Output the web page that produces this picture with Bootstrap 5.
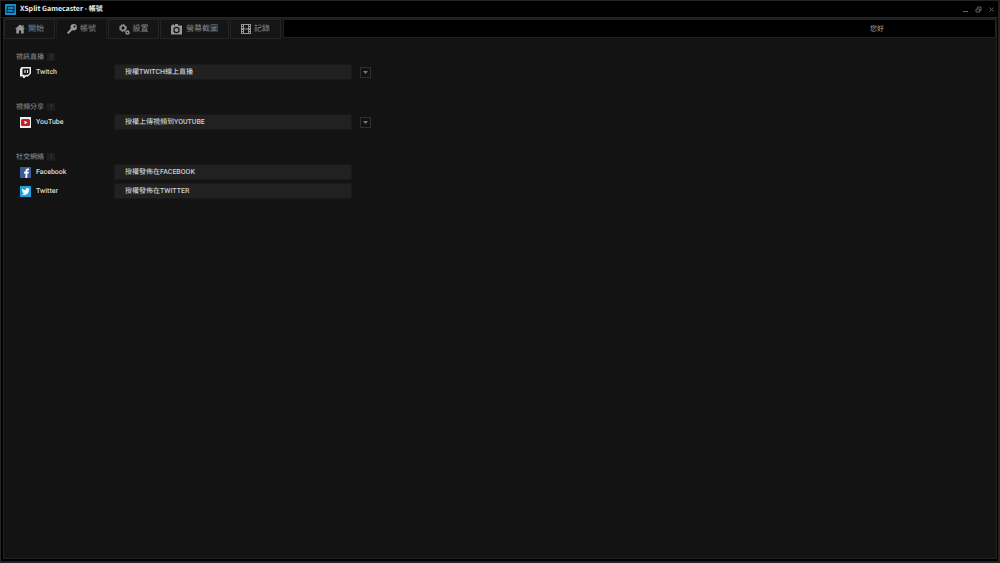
<!DOCTYPE html>
<html lang="zh-Hant">
<head>
<meta charset="utf-8">
<meta name="viewport" content="width=device-width, initial-scale=1">
<title>XSplit Gamecaster - 帳號</title>
<link href="https://cdn.jsdelivr.net/npm/bootstrap@5.3.0/dist/css/bootstrap.min.css" rel="stylesheet">
<style>
body{background:#131313;color:#b4b4b4;font-family:"Noto Sans CJK TC",sans-serif;font-size:7px;line-height:10px;text-rendering:geometricPrecision}
button{text-rendering:inherit}
.frame{border:1px solid #232323;border-width:1px 2px 2px 1px}
.titlebar{height:17px;background:#000;border-bottom:1px solid #262626;padding:0 0 0 4px}
.titlebar h1{font-size:7px;line-height:12px;color:#f0f0f0;padding-left:4px}
.winbtn{width:13px;height:14px;background:none;color:#606060}
.inner{border:1px solid #000;border-width:0 1px 2px 2px;box-shadow:inset 0 0 0 1px #202020}
.strip{padding:1px 1px 0;height:22px}
.tab{height:20px;background:#151515;border:1px solid #242424;color:#868686;font-size:8px;line-height:12px;gap:3px;margin-right:1px}
.tab.active{background:#131313;border-color:#1c1c1c #1c1c1c #131313}
.tab-s{width:51px}.tab-l{width:69px;gap:4px}
.greet{height:19px;background:#000;border:1px solid #202020;margin-left:1px;padding-right:111px;color:#aaa}
.main{padding:12px 13px}
.group{margin-bottom:22px}
.group h2{font-size:7px;line-height:10px;color:#808080;gap:3px}
.help{width:8px;height:8px;font-size:6px;line-height:8px;background:#1e1e1e;color:#484848}
.entry{height:16px;margin-bottom:3px}
.group .entry:first-of-type{margin-top:2px}
.svc,.auth{font-family:Roboto,"Noto Sans CJK TC",sans-serif;font-weight:500}
.svc{width:98px;padding-left:4px;gap:5px;color:#dadada}
.auth{width:238px;height:16px;background:#212121;border:1px solid #191919;color:#cacaca;padding:0 0 0 10px;line-height:12px}
.drop{width:11px;height:11px;margin-left:8px;background:#121212;border:1px solid #303030}
</style>
</head>
<body>
<div class="frame d-flex flex-column vh-100">
  <header class="titlebar d-flex align-items-center flex-shrink-0">
    <svg width="11" height="11" viewBox="0 0 11 11"><rect width="11" height="11" fill="#168bc8"/><path d="M9 7V2.500H2.500v3H6M2 4.500V8.300h6.500V5.500H5" fill="none" stroke="#07334f" stroke-width="1.200"/></svg>
    <h1 class="fw-bold m-0 me-auto">XSplit Gamecaster - 帳號</h1>
    <button class="winbtn border-0 p-0 d-flex align-items-center justify-content-center" aria-label="最小化"><svg width="7" height="7"><path d="M1 5.500h5" stroke="currentColor"/></svg></button>
    <button class="winbtn border-0 p-0 d-flex align-items-center justify-content-center" aria-label="還原"><svg width="7" height="7" fill="none" stroke="currentColor"><path d="M2.500 2.500V1H6v3.500H5M1 3h3.500v3H1z"/></svg></button>
    <button class="winbtn border-0 p-0 d-flex align-items-center justify-content-center" aria-label="關閉"><svg width="7" height="7"><path d="M1.500 1.500l4 4M5.500 1.500l-4 4" stroke="currentColor"/></svg></button>
  </header>
  <div class="inner flex-grow-1">
    <div class="strip d-flex">
      <nav class="d-flex">
        <button class="tab tab-s p-0 d-flex align-items-center justify-content-center"><svg width="10" height="10" viewBox="0 0 10 10" fill="#969696"><path d="M5 .5L0 5h1.300v4.500H4V6.500h2v3h2.700V5H10L8.500 3.600V1H7.300v1.500z"/></svg>開始</button>
        <button class="tab tab-s active p-0 d-flex align-items-center justify-content-center"><svg width="10" height="10" viewBox="0 0 10 10"><path d="M1.300 8.700L5.500 4.500" stroke="#999" stroke-width="2" stroke-linecap="round"/><path fill="#999" fill-rule="evenodd" d="M6.700.1a3.200 3.200 0 1 0 0 6.400 3.200 3.200 0 0 0 0-6.400M7.500 1.500a1 1 0 1 1 0 2 1 1 0 0 1 0-2"/></svg>帳號</button>
        <button class="tab tab-s p-0 d-flex align-items-center justify-content-center"><svg width="11" height="11" viewBox="0 0 11 11" fill="none" stroke="#969696"><circle cx="4" cy="4" r="2.500" stroke-width="1.700"/><circle cx="4" cy="4" r="3.500" stroke-dasharray="1.400 1.350"/><circle cx="8.500" cy="8.500" r="1.400" stroke-width="1.200"/><circle cx="8.500" cy="8.500" r="2.100" stroke-width=".7" stroke-dasharray="1 .6"/></svg>設置</button>
        <button class="tab tab-l p-0 d-flex align-items-center justify-content-center"><svg width="11" height="11" viewBox="0 0 11 11"><path fill="#969696" fill-rule="evenodd" d="M0 1.500h1V.5h2v1h1V0h3v1.500h4v9H0zM5.500 2.800a3.200 3.200 0 1 0 0 6.400 3.200 3.200 0 0 0 0-6.400"/><circle cx="5.500" cy="6" r="2" fill="#969696"/></svg>螢幕截圖</button>
        <button class="tab tab-s p-0 d-flex align-items-center justify-content-center"><svg width="10" height="10" viewBox="0 0 10 10"><path fill="#969696" fill-rule="evenodd" d="M0 0h10v10H0zM3 1v3.500h4V1zM3 5.500V9h4V5.500zM1 1v1h1V1zm0 2v1h1V3zm0 3v1h1V6zm0 2v1h1V8zM8 1v1h1V1zm0 2v1h1V3zm0 3v1h1V6zm0 2v1h1V8z"/></svg>記錄</button>
      </nav>
      <div class="greet flex-grow-1 d-flex align-items-center justify-content-end">您好</div>
    </div>
    <main class="main">
      <section class="group">
        <h2 class="d-flex align-items-center m-0">視訊直播<span class="help text-center">?</span></h2>
        <div class="entry d-flex align-items-center">
          <div class="svc d-flex align-items-center"><svg width="11" height="11" viewBox="0 0 11 11"><path d="M1.500 0H11v6.500L8 9.500H6L4.500 11H3V9.500H0V2z" fill="#eee"/><path d="M2.500 1.500h7v4.700L8 7.700H6L4.700 9V7.700H2.500z" fill="#171717"/><path d="M5 3v3M7.500 3v3" stroke="#eee" stroke-width="1.100"/></svg>Twitch</div>
          <button class="auth text-start">授權TWITCH線上直播</button>
          <button class="drop p-0 d-flex align-items-center justify-content-center" aria-label="Twitch 選項"><svg width="5" height="3"><path d="M0 0h5L2.500 3z" fill="#777"/></svg></button>
        </div>
      </section>
      <section class="group">
        <h2 class="d-flex align-items-center m-0">視頻分享<span class="help text-center">?</span></h2>
        <div class="entry d-flex align-items-center">
          <div class="svc d-flex align-items-center"><svg width="11" height="11" viewBox="0 0 11 11"><rect width="11" height="11" fill="#eee"/><rect x="1" y="2" width="9" height="7" rx="1.500" fill="#c4202b"/><path d="M4.500 3.800v3.400l3-1.700z" fill="#fff"/></svg>YouTube</div>
          <button class="auth text-start">授權上傳視頻到YOUTUBE</button>
          <button class="drop p-0 d-flex align-items-center justify-content-center" aria-label="YouTube 選項"><svg width="5" height="3"><path d="M0 0h5L2.500 3z" fill="#777"/></svg></button>
        </div>
      </section>
      <section class="group">
        <h2 class="d-flex align-items-center m-0">社交網絡<span class="help text-center">?</span></h2>
        <div class="entry d-flex align-items-center">
          <div class="svc d-flex align-items-center"><svg width="11" height="11" viewBox="0 0 11 11"><rect width="11" height="11" fill="#3b5998"/><path d="M5.500 11V6.500H4V4.800h1.500V3.500Q5.500 1.500 7.500 1.500H9v1.700H8q-.7 0-.7.7v.9H9l-.3 1.700H7.300V11z" fill="#fff"/></svg>Facebook</div>
          <button class="auth text-start">授權發佈在FACEBOOK</button>
        </div>
        <div class="entry d-flex align-items-center">
          <div class="svc d-flex align-items-center"><svg width="11" height="11" viewBox="0 0 11 11"><rect width="11" height="11" fill="#1da1d8"/><path d="M2 2.500q1.500 1.700 3.500 1.700Q5.500 2 7.300 2q.8 0 1.300.6l1-.3-.6 1 .7-.1-.8.9Q8.800 8.800 4.500 9q-1.700 0-2.700-.8 1.500 0 2.300-.7Q3 7.300 2.600 6.300h.8Q2 5.800 2 4.500l.7.200Q1.500 3.800 2 2.500" fill="#fff"/></svg>Twitter</div>
          <button class="auth text-start">授權發佈在TWITTER</button>
        </div>
      </section>
    </main>
  </div>
</div>
<script src="https://cdn.jsdelivr.net/npm/bootstrap@5.3.0/dist/js/bootstrap.bundle.min.js"></script>
</body>
</html>
